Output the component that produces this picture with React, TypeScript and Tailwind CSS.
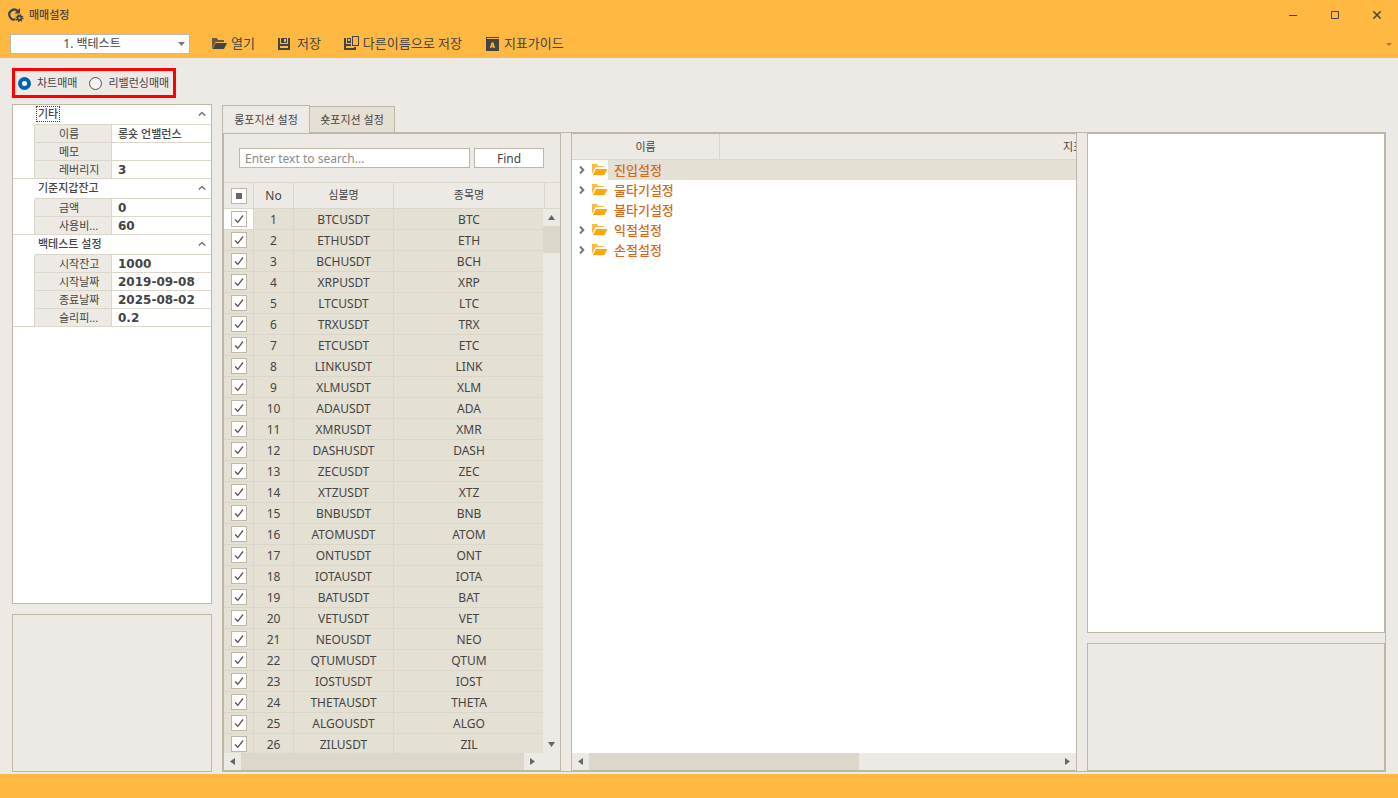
import { useState } from 'react';
import type { ReactNode } from 'react';

const symbols = [
  'BTC', 'ETH', 'BCH', 'XRP', 'LTC', 'TRX', 'ETC', 'LINK', 'XLM', 'ADA', 'XMR', 'DASH', 'ZEC',
  'XTZ', 'BNB', 'ATOM', 'ONT', 'IOTA', 'BAT', 'VET', 'NEO', 'QTUM', 'IOST', 'THETA', 'ALGO', 'ZIL',
];

const groups = [
  {
    name: '기타',
    items: [
      { label: '이름', value: '롱숏 언밸런스', korean: true },
      { label: '메모', value: '' },
      { label: '레버리지', value: '3' },
    ],
  },
  {
    name: '기준지갑잔고',
    items: [
      { label: '금액', value: '0' },
      { label: '사용비...', value: '60' },
    ],
  },
  {
    name: '백테스트 설정',
    items: [
      { label: '시작잔고', value: '1000' },
      { label: '시작날짜', value: '2019-09-08' },
      { label: '종료날짜', value: '2025-08-02' },
      { label: '슬리피...', value: '0.2' },
    ],
  },
];

const treeItems = [
  { name: '진입설정', children: true },
  { name: '물타기설정', children: true },
  { name: '불타기설정', children: false },
  { name: '익절설정', children: true },
  { name: '손절설정', children: true },
];

function AppIcon() {
  return (
    <svg className="h-4 w-4" viewBox="0 0 16 16" fill="none">
      <path d="M7.500 12.300A4.900 4.900 0 1 1 9.800 4.200" stroke="#444" strokeWidth="2.200" />
      <path d="M12 1v5.500H6.500z" fill="#444" />
      <circle cx="11.500" cy="11" r="2" stroke="#444" strokeWidth="1.800" />
      <circle cx="11.500" cy="11" r="3.300" stroke="#444" strokeWidth="1.400" strokeDasharray="1.300 1.292" />
    </svg>
  );
}

function OpenIcon() {
  return (
    <svg className="h-4 w-4" viewBox="0 0 16 16">
      <path d="M1 13V2h5l1 2h6v2H4.500L1 13z" fill="#6b5a3c" />
      <path d="M4.500 7H16l-3 6H1.500z" fill="#444" />
    </svg>
  );
}

function SaveIcon() {
  return (
    <svg className="h-4 w-4" viewBox="0 0 16 16" fill="#444">
      <path fillRule="evenodd" d="M1 2h2v6h8V2h2v12H1zM3 10h8v2H3z" />
      <path fillRule="evenodd" d="M4 2h6v5H4zM7 3h2v3H7z" />
    </svg>
  );
}

function SaveAsIcon() {
  return (
    <svg className="h-4 w-4" viewBox="0 0 16 16" fill="#444">
      <path d="M1 2h2v6h5v2H3v2h8v-1h2v3H1z" />
      <path fillRule="evenodd" d="M4 2h4v5H4zM5 3v2h2V3z" />
      <path fillRule="evenodd" d="M9 0h7v10H9zM10 1v8h5V1z" />
    </svg>
  );
}

function GuideIcon() {
  return (
    <svg className="h-4 w-4" viewBox="0 0 16 16">
      <path d="M2 1h13v1H3v1h12v12H2z" fill="#444" />
      <path d="M6.500 12 8.200 7h0.600l1.700 5M7.200 10.500h2.600" fill="none" stroke="#ffb942" strokeWidth="1.300" />
    </svg>
  );
}

function FolderIcon() {
  return (
    <svg className="h-4 w-4" viewBox="0 0 16 16">
      <path d="M0 12V2h5l1 2h6v1H3.500L0 12z" fill="#ffb942" />
      <path d="M4 7h11.500l-3 6H1z" fill="#fea60c" />
    </svg>
  );
}

function Arrow({ dir }: { dir: 'up' | 'down' | 'left' | 'right' }) {
  const d = {
    up: 'M1 7 4.500 2 8 7z',
    down: 'M1 2h7L4.500 7z',
    left: 'M7 1v7L2 4.500z',
    right: 'M2 1v7l5-3.500z',
  }[dir];
  return (
    <svg className="h-[9px] w-[9px]" viewBox="0 0 9 9">
      <path d={d} fill="#666" />
    </svg>
  );
}

function ScrollButton({ dir, label }: { dir: 'up' | 'down' | 'left' | 'right'; label: string }) {
  return (
    <button type="button" aria-label={label} className="flex h-[17px] w-[17px] shrink-0 items-center justify-center bg-[#edeae5]">
      <Arrow dir={dir} />
    </button>
  );
}

function ToolButton({ icon, children }: { icon: ReactNode; children: ReactNode }) {
  return (
    <button type="button" className="flex items-center gap-1 whitespace-nowrap text-[13px] leading-5">
      {icon}
      <span className="pb-[2px]">{children}</span>
    </button>
  );
}

function CheckBox({ label, partial }: { label: string; partial?: boolean }) {
  return (
    <span className="mx-auto grid h-4 w-4">
      <input
        type="checkbox"
        aria-label={label}
        defaultChecked={!partial}
        className="peer col-start-1 row-start-1 h-4 w-4 appearance-none border border-[#beb6a6] bg-white"
      />
      {partial ? (
        <span className="pointer-events-none col-start-1 row-start-1 m-[5px] bg-[#666]" />
      ) : (
        <svg
          className="pointer-events-none invisible col-start-1 row-start-1 h-4 w-4 peer-checked:visible"
          viewBox="0 0 16 16"
          fill="none"
        >
          <path d="M4 8.500 6.800 11.300 12 4.500" stroke="#555" strokeWidth="1.300" />
        </svg>
      )}
    </span>
  );
}

function PropertyGrid() {
  return (
    <section className="min-h-0 flex-1 overflow-hidden border border-[#beb6a6] bg-white text-[11px]">
      <table className="w-full table-fixed border-separate border-spacing-0">
        <colgroup>
          <col className="w-[22px]" />
          <col className="w-[77px]" />
          <col />
        </colgroup>
        {groups.map((group, g) => (
          <tbody key={group.name}>
            <tr>
              <td className="h-5 p-0" />
              <th colSpan={2} className="h-5 border-b border-[#dbd6ca] p-0 pr-1 pb-px font-medium">
                <div className="flex items-center justify-between leading-4">
                  <span className={g === 0 ? 'ml-px border border-dotted border-[#444] px-px leading-[14px]' : 'pl-[3px]'}>
                    {group.name}
                  </span>
                  <button type="button" aria-label={`${group.name} 접기`} className="flex h-4 w-[10px] items-center justify-center">
                    <svg className="h-[6px] w-2" viewBox="0 0 8 6" fill="none">
                      <path d="M0.800 4.500 4 1.500l3.200 3" stroke="#777" strokeWidth="1.600" />
                    </svg>
                  </button>
                </div>
              </th>
            </tr>
            {group.items.map((item, i) => (
              <tr key={item.label}>
                <td
                  className={`h-[18px] border-r border-[#dbd6ca] p-0 ${i === group.items.length - 1 ? 'border-b' : ''}`}
                />
                <th className="h-[18px] border-r border-b border-[#dbd6ca] bg-[#edeae5] p-0 pl-6 text-left leading-4 font-normal whitespace-nowrap">
                  {item.label}
                </th>
                <td
                  className={`h-[18px] border-b border-[#dbd6ca] p-0 pl-[6px] leading-4 whitespace-nowrap ${
                    item.korean ? 'font-medium' : "font-['DejaVu_Sans',sans-serif] text-xs leading-4 font-bold"
                  }`}
                >
                  {item.value}
                </td>
              </tr>
            ))}
          </tbody>
        ))}
      </table>
    </section>
  );
}

function SymbolPanel() {
  return (
    <section className="flex w-[338px] shrink-0 flex-col border border-[#beb6a6]">
      <form className="flex gap-1 px-[15px] pt-[14px] pb-[14px] text-xs" onSubmit={(e) => e.preventDefault()}>
        <input
          type="text"
          aria-label="Search"
          placeholder="Enter text to search..."
          className="h-5 w-[231px] border border-[#beb6a6] bg-white px-[5px] placeholder:text-[#8a8a8a] focus:outline-none"
        />
        <button type="submit" className="h-5 w-[70px] border border-[#beb6a6] bg-white pt-px leading-4">
          Find
        </button>
      </form>

      <div className="relative min-h-0 flex-1 overflow-hidden">
        <table className="w-full table-fixed border-separate border-spacing-0 text-center text-xs">
          <colgroup>
            <col className="w-[30px]" />
            <col className="w-10" />
            <col className="w-[100px]" />
            <col className="w-[151px]" />
            <col />
          </colgroup>
          <thead>
            <tr className="[&>th]:h-[27px] [&>th]:border-y [&>th]:border-[#dbd6ca] [&>th]:p-0 [&>th]:font-normal">
              <th className="border-r">
                <CheckBox label="전체 선택" partial />
              </th>
              <th className="border-r">No</th>
              <th className="border-r text-[11px]">심볼명</th>
              <th className="border-r text-[11px]">종목명</th>
              <th />
            </tr>
          </thead>
          <tbody className="bg-[#e4e0d4]">
            {symbols.map((symbol, i) => (
              <tr
                key={symbol}
                className="[&>td]:h-[21px] [&>td]:border-r [&>td]:border-b [&>td]:border-[#dbd6ca] [&>td]:leading-4"
              >
                <td className={i === 0 ? 'bg-white p-0' : 'p-0'}>
                  <CheckBox label={symbol} />
                </td>
                <td className="p-0 pt-[2px]">{i + 1}</td>
                <td className="p-0 pt-[2px]">{symbol}USDT</td>
                <td className="p-0 pt-[2px]">{symbol}</td>
                <td className="p-0" />
              </tr>
            ))}
          </tbody>
        </table>
        <div className="absolute top-[27px] right-0 bottom-0 flex flex-col bg-[#edeae5]">
          <ScrollButton dir="up" label="위로" />
          <div className="h-[27px] bg-[#dbd7cb]" />
          <div className="flex-1" />
          <ScrollButton dir="down" label="아래로" />
        </div>
      </div>

      <div className="flex pr-[19px]">
        <ScrollButton dir="left" label="왼쪽으로" />
        <div className="flex-1 bg-[#dbd7cb]" />
        <ScrollButton dir="right" label="오른쪽으로" />
      </div>
    </section>
  );
}

function SettingTree() {
  const [selected, setSelected] = useState('진입설정');

  return (
    <section className="flex min-w-0 flex-1 flex-col border border-[#beb6a6] bg-white">
      <div className="flex overflow-hidden border-b border-[#dbd6ca] bg-[#edeae5] text-center text-[11px] leading-[25px]">
        <div className="w-[148px] shrink-0 border-r border-[#dbd6ca]">이름</div>
        <div className="w-[706px] shrink-0">지표</div>
      </div>
      <ul className="min-h-0 flex-1 overflow-hidden text-[13px] font-medium text-[#d2691e]">
        {treeItems.map((item) => (
          <li key={item.name} className="flex h-5">
            <span className="flex w-5 items-center justify-center">
              {item.children && (
                <svg className="h-2 w-[6px]" viewBox="0 0 6 8" fill="none">
                  <path d="M1 0.500 4.300 4 1 7.500" stroke="#777" strokeWidth="2" />
                </svg>
              )}
            </span>
            <span className="flex w-4 items-center">
              <FolderIcon />
            </span>
            <button
              type="button"
              onClick={() => setSelected(item.name)}
              className={`flex-1 pl-[6px] text-left leading-5 ${selected === item.name ? 'bg-[#e4e0d4]' : ''}`}
            >
              {item.name}
            </button>
          </li>
        ))}
      </ul>
      <div className="flex bg-[#edeae5]">
        <ScrollButton dir="left" label="왼쪽으로" />
        <div className="flex-1">
          <div className="h-[17px] w-[270px] bg-[#dbd7cb]" />
        </div>
        <ScrollButton dir="right" label="오른쪽으로" />
      </div>
    </section>
  );
}

export default function App() {
  const [mode, setMode] = useState('chart');
  const [tab, setTab] = useState('long');

  const modes = [
    { id: 'chart', label: '차트매매' },
    { id: 'rebalance', label: '리밸런싱매매' },
  ];
  const tabs = [
    { id: 'long', label: '롱포지션 설정' },
    { id: 'short', label: '숏포지션 설정' },
  ];

  return (
    <div className="flex h-screen flex-col bg-[#edeae5] font-['Noto_Sans','Noto_Sans_CJK_KR',sans-serif] text-[#444]">
      {/* Title bar */}
      <header className="bg-[#ffb942]">
        <div className="flex h-[30px] items-center pl-2">
          <AppIcon />
          <h1 className="ml-[5px] flex-1 text-[11px] leading-4 font-medium">매매설정</h1>
          <button type="button" aria-label="최소화" className="flex h-[30px] w-[42px] items-center justify-center">
            <svg className="h-2 w-2" viewBox="0 0 8 8">
              <path d="M0 4h8v1H0z" fill="#444" />
            </svg>
          </button>
          <button type="button" aria-label="최대화" className="flex h-[30px] w-[42px] items-center justify-center">
            <svg className="h-2 w-2" viewBox="0 0 8 8" fill="none">
              <path d="M0.500 0.500h7v7h-7z" stroke="#444" />
            </svg>
          </button>
          <button type="button" aria-label="닫기" className="flex h-[30px] w-[42px] items-center justify-center">
            <svg className="h-2 w-2" viewBox="0 0 8 8" fill="none">
              <path d="M0.300 0.300 7.700 7.700M7.700 0.300 0.300 7.700" stroke="#444" strokeWidth="1.500" />
            </svg>
          </button>
        </div>

        {/* Toolbar */}
        <div className="flex h-7 items-center pr-[6px] pl-[10px]">
          <div className="relative mr-[21px]">
            <select
              aria-label="설정 선택"
              className="block h-5 w-[180px] appearance-none border border-[#beb6a6] bg-white pr-4 text-center text-xs leading-4"
            >
              <option>1. 백테스트</option>
            </select>
            <svg className="pointer-events-none absolute top-2 right-[5px] h-1 w-[7px]" viewBox="0 0 7 4">
              <path d="M0 0h7L3.500 4z" fill="#777" />
            </svg>
          </div>
          <nav className="flex flex-1 gap-[22px]">
            <ToolButton icon={<OpenIcon />}>열기</ToolButton>
            <ToolButton icon={<SaveIcon />}>저장</ToolButton>
            <ToolButton icon={<SaveAsIcon />}>다른이름으로 저장</ToolButton>
            <ToolButton icon={<GuideIcon />}>지표가이드</ToolButton>
          </nav>
          <button type="button" aria-label="더 보기">
            <svg className="h-[3px] w-[6px]" viewBox="0 0 6 3">
              <path d="M0 0h6L3 3z" fill="#a07a3c" />
            </svg>
          </button>
        </div>
      </header>

      <main className="flex min-h-0 flex-1 flex-col gap-[6px] px-3 pt-[10px] pb-[2px]">
        {/* Trading mode */}
        <div className="flex h-[30px] items-center gap-3 self-start border-3 border-[#ff0000] pr-1 pl-[3px] text-[11px] leading-4">
          {modes.map((m) => (
            <label key={m.id} className="flex items-center gap-[6px]">
              <input
                type="radio"
                name="mode"
                checked={mode === m.id}
                onChange={() => setMode(m.id)}
                className="h-[13px] w-[13px] appearance-none rounded-full border border-[#555] bg-[#f4f3f1] checked:border-4 checked:border-[#0063b1] checked:bg-white"
              />
              {m.label}
            </label>
          ))}
        </div>

        <div className="flex min-h-0 flex-1 gap-[10px]">
          <aside className="flex w-[200px] shrink-0 flex-col gap-[10px]">
            <PropertyGrid />
            <div className="h-[158px] shrink-0 border border-[#beb6a6]" />
          </aside>

          <div className="flex min-w-0 flex-1 flex-col pt-px">
            {/* Tabs */}
            <div role="tablist" className="z-10 -mb-px flex h-7 items-end text-[11px] leading-4">
              {tabs.map((t) => (
                <button
                  key={t.id}
                  type="button"
                  role="tab"
                  aria-selected={tab === t.id}
                  onClick={() => setTab(t.id)}
                  className={`-mr-px border-[#beb6a6] ${
                    tab === t.id ? 'h-7 w-[88px] border-x border-t bg-[#edeae5]' : 'h-[27px] w-[86px] border bg-[#e4e0d4]'
                  }`}
                >
                  {t.label}
                </button>
              ))}
            </div>

            <div className="flex min-h-0 flex-1 gap-[10px] border border-[#beb6a6]">
              <SymbolPanel />
              <SettingTree />
              <div className="flex w-[298px] shrink-0 flex-col gap-[10px]">
                <div className="flex-1 border border-[#beb6a6] bg-white" />
                <div className="h-32 shrink-0 border border-[#beb6a6]" />
              </div>
            </div>
          </div>
        </div>
      </main>

      <footer className="h-6 shrink-0 bg-[#ffb942]" />
    </div>
  );
}
